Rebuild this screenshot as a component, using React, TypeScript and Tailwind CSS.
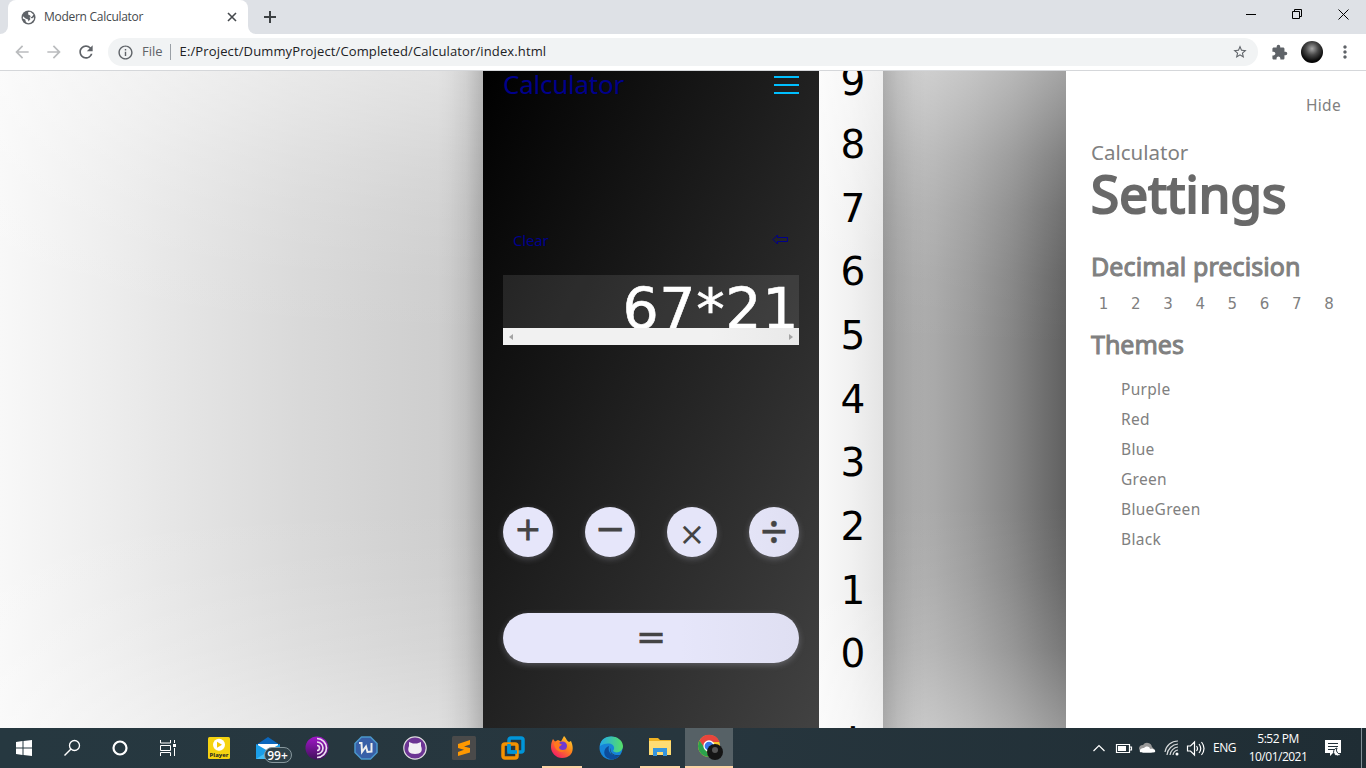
import React from "react";
import { MdRefresh, MdStarBorder, MdExtension, MdMoreVert, MdArrowBack, MdArrowForward, MdInfoOutline } from "react-icons/md";

const digits = ["9", "8", "7", "6", "5", "4", "3", "2", "1", "0", "."];
const precisions = ["1", "2", "3", "4", "5", "6", "7", "8"];
const themes = ["Purple", "Red", "Blue", "Green", "BlueGreen", "Black"];

function TabStrip() {
  return (
    <div className="flex h-[34px] shrink-0 bg-[#dee1e6]">
      <div className="flex w-2 items-end bg-white">
        <div className="h-full w-2 rounded-br-lg bg-[#dee1e6]" />
      </div>
      <div className="bg-[#dee1e6]">
        <div className="flex h-[34px] w-[240px] items-center rounded-t-lg bg-white pl-[13px]">
          <svg className="h-[15px] w-[15px]" viewBox="0 0 15 15"><circle cx="7.500" cy="7.500" r="7" fill="#5f6368" /><path d="M7 2.200L9.200 1.800 12.500 4.500 11 6.800 8.500 7.500 9.500 9 7.500 11.500 7 9.500 4.500 8.500 2 6.200 1.800 8.500 4.200 9.500 5 12.200 7.200 13.200 10 12.500 12.800 9.500 13 7 11 8.500 10 7.800 9 5.200 7.500 5z" fill="#fff" /></svg>
          <span className="ml-2 w-[183px] whitespace-nowrap font-['Open_Sans',sans-serif] text-[12px] tracking-[-0.280px] text-[#45494d]">Modern Calculator</span>
          <svg className="h-[10px] w-[10px]" viewBox="0 0 10 10" stroke="#45494d" strokeWidth="1.600"><path d="M1 1l8 8M9 1L1 9" /></svg>
        </div>
      </div>
      <div className="w-2 bg-white"><div className="h-full w-2 rounded-bl-lg bg-[#dee1e6]" /></div>
      <svg className="mt-[11px] ml-2 h-3 w-3" viewBox="0 0 12 12" stroke="#3c4043" strokeWidth="2"><path d="M6 0v12M0 6h12" /></svg>
      <div className="flex-1" />
      <svg className="h-7 w-[120px]" viewBox="0 0 120 28" fill="none" stroke="#000" strokeWidth="1">
        <path d="M0 14.500h10M46.500 11.500h7v7h-7zM48.500 11v-1.500h7v7h-2M92.500 9.500l10 10M102.500 9.500l-10 10" />
      </svg>
    </div>
  );
}

function Toolbar() {
  return (
    <div className="flex h-[37px] shrink-0 items-center border-b border-[#d5d7da] bg-white font-['Open_Sans',sans-serif]">
      <MdArrowBack className="ml-3 h-5 w-5 text-[#babcbe]" />
      <MdArrowForward className="ml-3 h-5 w-5 text-[#babcbe]" />
      <MdRefresh className="ml-3 h-5 w-5 text-[#5f6368]" />
      <div className="ml-[12px] flex h-7 w-[1150px] items-center rounded-full bg-[#f1f3f4] pl-[9px] text-[13px]">
        <MdInfoOutline className="h-[17px] w-[17px] text-[#5f6368]" />
        <span className="ml-2 text-[#5f6368]">File</span>
        <span className="ml-[7px] h-4 w-px bg-[#9aa0a6]" />
        <span className="ml-[9px] flex-1 whitespace-nowrap tracking-[0.130px] text-[#202124]">E:/Project/DummyProject/Completed/Calculator/index.html</span>
        <MdStarBorder className="mr-[10px] h-4 w-4 text-[#5f6368]" />
      </div>
      <MdExtension className="ml-[13px] h-[17px] w-[17px] text-[#5f6368]" />
      <div className="ml-[13px] h-[22px] w-[22px] rounded-full bg-[radial-gradient(circle_at_50%_35%,#a8a8a8_0%,#484848_35%,#060606_70%)]" />
      <MdMoreVert className="ml-[12px] h-5 w-5 text-[#5f6368]" />
    </div>
  );
}

function Calculator() {
  const round = "flex h-[50px] w-[50px] justify-center rounded-full shadow-[0_2px_6px_rgba(230,230,250,0.25)]";
  return (
    <div className="flex w-[400px] shrink-0 font-['DejaVu_Sans',sans-serif]">
      <main className="h-[657px] w-[336px] shrink-0 overflow-hidden bg-[linear-gradient(118deg,#000,#424242)] px-5">
        <div className="flex h-[45px] justify-between">
          <h1 className="-mt-[5px] whitespace-nowrap font-['Noto_Sans',sans-serif] text-[26px] leading-[36px] tracking-[-0.250px] text-[#00008b]">Calculator</h1>
          <div className="mt-[5px] flex h-[18px] w-[25px] flex-col justify-between">
            <span className="h-[2px] bg-[#00bfff]" />
            <span className="h-[2px] bg-[#00bfff]" />
            <span className="h-[2px] bg-[#00bfff]" />
          </div>
        </div>
        <div className="mt-[112px] flex h-[23px] items-center justify-between pr-[11px] pl-[10px] font-['Noto_Sans',sans-serif] text-[15px] leading-5 tracking-[-0.200px] text-[#00008b]">
          <span>Clear</span>
          <svg className="h-[11px] w-4" viewBox="0 0 16 11" fill="none" stroke="#00008b"><path d="M1 5.500L5.500 1v2.500h10v4h-10V10z" /></svg>
        </div>
        <div className="mt-[24px] flex h-[53px] justify-end overflow-hidden bg-white/10">
          <span className="mt-[1px] whitespace-nowrap text-[57px] leading-[67px] tracking-[0.600px] text-white [-webkit-text-stroke:0.600px_white]">67*21</span>
        </div>
        <div className="flex h-[17px] items-center justify-between bg-[linear-gradient(90deg,#f1f1f1_70%,#e9e9e9)] px-[6px]">
          <span className="h-0 w-0 border-y-[3.500px] border-r-4 border-y-transparent border-r-[#a3a3a3]" />
          <span className="h-0 w-0 border-y-[3.500px] border-l-4 border-y-transparent border-l-[#a3a3a3]" />
        </div>
        <div className="mt-[162px] flex justify-between leading-[50px] text-[#444]">
          <div className={`${round} bg-[#e6e6fa] text-[32px] [-webkit-text-stroke:0.800px_#444]`}><span className="-mt-[3px]">+</span></div>
          <div className={`${round} bg-[#e6e6fa] text-[36px] [-webkit-text-stroke:0.800px_#444]`}><span className="-mt-[3px]">−</span></div>
          <div className={`${round} bg-[#e5e5f9] text-[32px]`}><span className="mt-[2px]">×</span></div>
          <div className={`${round} bg-[linear-gradient(90deg,#e4e4f7,#dfdff2)] font-['Noto_Sans',sans-serif] text-[48px] [-webkit-text-stroke:0.400px_#444]`}><span className="-mt-px">÷</span></div>
        </div>
        <div className="mt-14 flex h-[50px] justify-center rounded-full bg-[linear-gradient(90deg,#e6e6fa_60%,#dfdff2)] text-[36px] leading-[48px] text-[#444] shadow-[0_2px_6px_rgba(230,230,250,0.25)] [-webkit-text-stroke:0.600px_#444]">=</div>
      </main>
      <aside className="h-[657px] w-16 shrink-0 overflow-hidden bg-[linear-gradient(180deg,rgba(255,255,255,0.45),rgba(255,255,255,0)_30%_78%,rgba(255,255,255,0.4)),linear-gradient(90deg,#f9f9f9,#f1f1f1_50%,#e4e4e4)] pl-1">
        <div className="-mt-[21.500px] flex flex-col text-center text-[39px] text-black">
          {digits.map((d) => <span key={d} className="h-[63.650px] leading-[63.650px]">{d}</span>)}
        </div>
      </aside>
    </div>
  );
}

function Settings() {
  return (
    <section className="ml-auto h-full w-[300px] shrink-0 bg-white px-[25px] font-['Noto_Sans',sans-serif] text-[#808080]">
      <div className="pt-[22px] text-right text-[15.500px] leading-6 tracking-[0.300px]">Hide</div>
      <div className="mt-[22px] text-[20.500px] leading-[26px]">Calculator</div>
      <h2 className="-mt-[2px] h-[60px] whitespace-nowrap text-[51px] leading-[60px] tracking-[0.200px] text-[#696969] [-webkit-text-stroke:2.200px_#696969]">Settings</h2>
      <h3 className="mt-[27px] whitespace-nowrap text-[25px] leading-8 tracking-[0.100px] [-webkit-text-stroke:1px_#808080]">Decimal precision</h3>
      <div className="mt-[10px] -mr-3 ml-[-3.500px] flex h-6">
        {precisions.map((p) => <span key={p} className="w-[32.200px] text-center font-['DejaVu_Sans',sans-serif] text-[15px] leading-6">{p}</span>)}
      </div>
      <h3 className="mt-[12px] text-[25px] leading-8 [-webkit-text-stroke:1px_#808080]">Themes</h3>
      <ul className="mt-[14px] pl-[30px]">
        {themes.map((t) => <li key={t} className="h-[30px] text-[15.500px] leading-[30px] tracking-[0.300px]">{t}</li>)}
      </ul>
    </section>
  );
}

function AppIcon({ kind }: { kind: string }) {
  if (kind === "player") return (
    <svg viewBox="0 0 24 24" className="h-6 w-6"><rect x="1" y="1" width="22" height="22" rx="1.500" fill="#f5d311" /><circle cx="12" cy="8.700" r="6" fill="#fff" /><path d="M10 5.700l5 3-5 3z" fill="#f5c800" /><text x="12" y="21" textAnchor="middle" fontFamily="Open Sans" fontSize="6" fontWeight="700" fill="#222">Player</text></svg>
  );
  if (kind === "mail") return (
    <svg viewBox="0 0 36 28" className="h-7 w-9 overflow-visible"><path d="M0 11L12 3l12 8v14H0z" fill="#0b67bd" /><path d="M2 10h20v8H2z" fill="#fff" /><path d="M0 10l12 7 12-7v15H0z" fill="#1b9ee8" /><path d="M0 25L16 15l8 10z" fill="#43bdf5" /><rect x="8.500" y="13.500" width="27" height="15" rx="7.500" fill="#2f4149" stroke="#87979d" /><text x="21.500" y="25.500" textAnchor="middle" fontFamily="Open Sans" fontSize="12" fontWeight="600" fill="#fff">99+</text></svg>
  );
  if (kind === "tor") return (
    <svg viewBox="0 0 24 24" className="h-6 w-6" fill="none"><defs><linearGradient id="tor" x2="0" y2="1"><stop stopColor="#a116c9" /><stop offset="1" stopColor="#41115b" /></linearGradient></defs><circle cx="12" cy="12" r="11.500" fill="url(#tor)" /><path d="M12 2.500a9.500 9.500 0 0 1 0 19M12 6a6 6 0 0 1 0 12M12 9.500a2.500 2.500 0 0 1 0 5" stroke="#eadcf0" strokeWidth="1.700" /></svg>
  );
  if (kind === "w") return (
    <svg viewBox="0 0 24 24" className="h-6 w-6" fill="none"><path d="M7.500 1h9L23 7.500v9L16.500 23h-9L1 16.500v-9z" fill="#385fa7" stroke="#4b98cc" strokeWidth="1.500" strokeLinejoin="round" /><path d="M5 7h2.500l.5 9 4-5.500 1.500 5.500 4-.5V7" stroke="#eee" strokeWidth="2" /></svg>
  );
  if (kind === "cat") return (
    <svg viewBox="0 0 24 24" className="h-6 w-6"><circle cx="12" cy="12" r="11.200" fill="#6c3494" stroke="#ddd" strokeWidth="1.200" /><path d="M6 6l4 1.500h4L18 6v4c2 5 0 8-6 8s-8-3-6-8z" fill="#f2eff4" /></svg>
  );
  if (kind === "sublime") return (
    <svg viewBox="0 0 24 24" className="h-6 w-6"><rect width="24" height="24" rx="1.500" fill="#4a4a4a" /><path d="M6 8l12-4v4.500l-6 2 6 1.500v4.500L6 20v-4l6-2.200L6 12z" fill="#ff9800" /></svg>
  );
  if (kind === "vm") return (
    <svg viewBox="0 0 24 24" className="h-6 w-6" fill="none" strokeWidth="3.500"><rect x="8" y="2" width="14" height="14" rx="2" stroke="#0095d9" /><rect x="2" y="8" width="14" height="14" rx="2" stroke="#f59100" /><path d="M8 8v8h8" stroke="#0095d9" /></svg>
  );
  if (kind === "firefox") return (
    <svg viewBox="0 0 24 24" className="h-6 w-6"><defs><linearGradient id="ff" x1="1" x2=".2" y2="1"><stop stopColor="#ffe33b" /><stop offset=".45" stopColor="#ff8a18" /><stop offset="1" stopColor="#f3136a" /></linearGradient></defs><path d="M1 12c0-4 1-6 2-8l2 2.500 3-1.500 3 1.500 3-5.500c3 3 2 4 5 6l2-1c4 9 1 17-9 17C6 23 1 18 1 12z" fill="url(#ff)" /><circle cx="12.500" cy="11" r="4.500" fill="#7139cf" /><path d="M4 8c5-2 5 1 8 1.500l-3 2.500c0 3 4 4 7 2-3 6-12 2-12-6z" fill="#ff781d" /></svg>
  );
  if (kind === "edge") return (
    <svg viewBox="0 0 24 24" className="h-6 w-6"><defs><linearGradient id="ed" x2="1"><stop stopColor="#23a9e8" /><stop offset="1" stopColor="#55df67" /></linearGradient></defs><circle cx="12" cy="12" r="11.500" fill="#1684d8" /><path d="M1 10C2-3 23-2 24 10c0 6-7 8-10 5 4-5-3-11-13-5z" fill="url(#ed)" /><path d="M12 12c-2 6 5 9 12 6-4 4-11 1-12-1-1-2-1-4 0-5z" fill="#26363f" /><path d="M10 10c-6 2-7 11 1 13 5 1 8-1 10-4-7 2-13-2-11-9z" fill="#0c4c9b" /></svg>
  );
  if (kind === "folder") return (
    <svg viewBox="0 0 24 24" className="h-6 w-6"><path d="M1 3h9l2 2h11v15H1z" fill="#f0b323" /><path d="M1 6h22v14H1z" fill="#ffdc73" /><path d="M5 13h14v8h-4v-4H9v4H5z" fill="#3695dd" /></svg>
  );
  return (
    <svg viewBox="0 0 27 27" className="h-[27px] w-[27px]"><circle cx="12" cy="12" r="11" fill="#f8c72d" /><path d="M2.500 6.500A11 11 0 0 1 22.500 8H12l-5 6z" fill="#e8453c" /><path d="M2.500 6.500L9 16l3 7A11 11 0 0 1 2.500 6.500z" fill="#2ba24c" /><circle cx="12" cy="12" r="5" fill="#3778e8" stroke="#fff" strokeWidth="1.300" /><circle cx="18" cy="18" r="8" fill="#151515" /><circle cx="18" cy="16" r="3" fill="#555" /></svg>
  );
}

const apps = [
  { kind: "player", box: "w-[49px]" },
  { kind: "mail", box: "w-[49px] pl-3" },
  { kind: "tor", box: "w-[49px]" },
  { kind: "w", box: "w-[49px]" },
  { kind: "cat", box: "w-[49px]" },
  { kind: "sublime", box: "w-[49px]" },
  { kind: "vm", box: "w-[49px]" },
  { kind: "firefox", box: "w-10 mx-[4.500px] border-b-2 border-[#fcd3a5]" },
  { kind: "edge", box: "w-[49px]" },
  { kind: "folder", box: "w-10 mx-[4.500px] border-b-2 border-[#fcd3a5]" },
  { kind: "chrome", box: "ml-px w-12 border-b-2 border-[#fcd3a5] bg-[#566166] pl-[2px]" },
];

function Taskbar() {
  return (
    <div className="flex h-10 shrink-0 bg-[linear-gradient(90deg,#263840,#27363e_50%,#1f2d34)] text-white">
      <svg className="h-10 w-[194px] shrink-0" viewBox="0 0 194 40" fill="none" stroke="#fff">
        <path d="M16 14l6.500-1v6.500H16zM23.500 13l8.500-1v7.500h-8.500zM16 20.500h6.500V27L16 26zM23.500 20.500H32V28l-8.500-1z" fill="#fff" stroke="none" />
        <circle cx="74.500" cy="17.500" r="5" strokeWidth="1.300" /><path d="M71 21l-6.500 6.500" strokeWidth="1.500" />
        <circle cx="120" cy="20" r="6.500" strokeWidth="2.200" />
        <path d="M160.500 12v3h10v-3M160.500 17.500h10v5h-10zM160.500 28v-3.500h10V28M174.500 12v3M174.500 20v8" /><path d="M173 16h3v3h-3z" fill="#fff" stroke="none" />
      </svg>
      {apps.map((a) => <div key={a.kind} className={`flex h-10 shrink-0 items-center justify-center ${a.box}`}><AppIcon kind={a.kind} /></div>)}
      <div className="flex-1" />
      <svg className="h-10 w-[120px] shrink-0" viewBox="0 0 120 40" fill="none" stroke="#fff" strokeWidth="1.200">
        <path d="M7.500 23l5.500-5.500 5.500 5.500" />
        <path d="M30.500 16.500h13v8h-13zM44 19h1.500v3H44" /><path d="M32 18h8v5h-8z" fill="#fff" stroke="none" />
        <path d="M53 21a4 4 0 0 1 4-4 5 5 0 0 1 9 2l3 3v2H55z" fill="#999" stroke="none" /><path d="M54 24c-1-3 2-4 4-4 3-3 6-1 6 1 4-1 6 2 5 3-1 1-15 1-15 0z" fill="#fff" stroke="none" />
        <path d="M81 27a12 12 0 0 1 11-11M84 27a9 9 0 0 1 8-8M87 27a6 6 0 0 1 5-5M79 24a13 13 0 0 1 13-11" stroke="#d6d9da" /><circle cx="91" cy="26" r="1.500" fill="#fff" stroke="none" />
        <path d="M101.500 18h3l4-4v13l-4-4h-3zM110.500 18q2 2.500 0 5M113 16q3.500 4.500 0 9M115.500 14q5 6.500 0 13" />
      </svg>
      <span className="ml-[7px] w-[24px] whitespace-nowrap font-['Open_Sans',sans-serif] text-[12px] leading-10 tracking-[-0.500px]">ENG</span>
      <div className="ml-[8px] w-[66px] whitespace-nowrap pt-[2px] text-center font-['Open_Sans',sans-serif] text-[12px] leading-[18px] tracking-[-0.500px]">
        <div>5:52 PM</div><div>10/01/2021</div>
      </div>
      <svg className="ml-[13px] h-10 w-[42px] shrink-0" viewBox="0 0 42 40"><path d="M1 12h16v13h-8l-3 3v-3H1z" fill="#fff" /><path d="M4 15.500h10M4 18.500h10M4 21.500h6" stroke="#22313a" /><path d="M13 20a4 4 0 1 0 4 6 4 4 0 0 1-4-6z" fill="#fff" stroke="#22313a" /><path d="M37.500 0v40" stroke="#829097" /></svg>
    </div>
  );
}

export default function App() {
  return (
    <div className="flex h-[768px] w-[1366px] flex-col overflow-hidden">
      <TabStrip />
      <Toolbar />
      <div className="flex h-[657px] shrink-0 overflow-hidden bg-[linear-gradient(90deg,rgba(0,0,0,0)_438px,rgba(0,0,0,0.02)_450px,rgba(0,0,0,0.07)_466px,rgba(0,0,0,0.19)_483px,rgba(0,0,0,0.17)_883px,rgba(0,0,0,0.08)_898px,rgba(0,0,0,0.02)_914px,rgba(0,0,0,0)_926px),linear-gradient(180deg,rgba(255,255,255,0.42),rgba(255,255,255,0.32)_6%,rgba(255,255,255,0.2)_13%,rgba(255,255,255,0.1)_21%,rgba(255,255,255,0.03)_31%,rgba(255,255,255,0)_42%_66%,rgba(255,255,255,0.05)_77%,rgba(255,255,255,0.15)_88%,rgba(255,255,255,0.34)),linear-gradient(90deg,#f8f8f8,#eee_100px,#e3e3e3_200px,#d9d9d9_300px,#d1d1d1_400px,#cecece_440px,#b3b3b3_883px,#a9a9a9_935px,#9b9b9b_970px,#858585_1012px,#606060_1066px)] pl-[483px]">
        <Calculator />
        <Settings />
      </div>
      <Taskbar />
    </div>
  );
}
